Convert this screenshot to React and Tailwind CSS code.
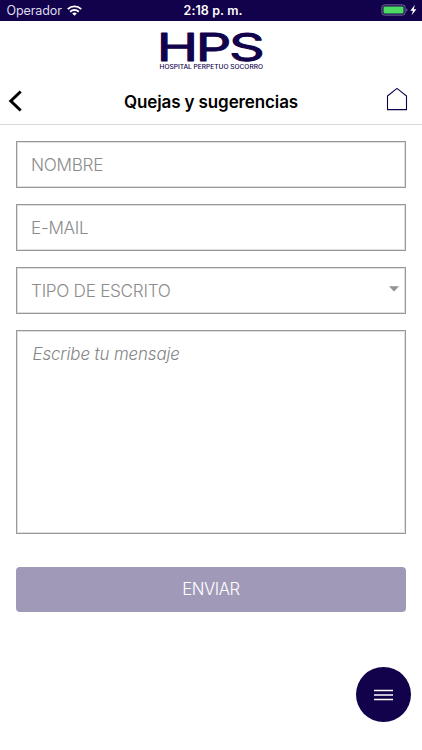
function StatusBar() {
  return (
    <div className="relative flex h-[20.5px] items-center justify-between bg-[#12024b] pl-[6.5px] pr-[4px] text-white">
      <div className="flex items-center gap-[5px]">
        <span className="mt-[2px] text-[12.5px] leading-5 tracking-[-0.1px] text-[#dedbee]">Operador</span>
        <svg width="15" height="11" viewBox="0 0 15 11" fill="none" stroke="#fff" strokeWidth="1.9">
          <path d="M.8 4.1a9.6 9.6 0 0 1 13.4 0" />
          <path d="M3.2 6.8a6.2 6.2 0 0 1 8.6 0" />
          <path d="M7.5 10.8 5.2 8.6a3.3 3.3 0 0 1 4.6 0z" fill="#fff" stroke="none" />
        </svg>
      </div>
      <span className="absolute left-[183.5px] top-[1px] text-[12.5px] font-semibold leading-5 tracking-[0.1px]">2:18 p. m.</span>
      <svg width="37" height="12" viewBox="0 0 37 12">
        <rect x=".9" y=".9" width="23.2" height="10.2" rx="2.6" fill="none" stroke="#77709a" />
        <rect x="2.5" y="2.4" width="20" height="7.2" rx="1" fill="#4cd964" />
        <path d="M25.4 4.2c1.4.6 1.4 3 0 3.6z" fill="#77709a" />
        <path d="m33.9.8-4.6 6h2.6l-1.3 4.4 4.8-6h-2.7z" fill="#fff" />
      </svg>
    </div>
  );
}

function Header() {
  return (
    <header className="flex h-[104.5px] flex-col items-center border-b border-[#dadada]">
      <svg className="mt-[9.5px] h-[42px] w-[110px] shrink-0 overflow-visible" viewBox="156 30 110 42" fill="#12024b" fontFamily="Inter, sans-serif">
        <text x="156.7" y="60.8" fontSize="38.6" fontWeight="400" stroke="#12024b" strokeWidth="1" strokeLinejoin="round" letterSpacing="-1.6" textLength="105.6" lengthAdjust="spacingAndGlyphs">HPS</text>
        <text x="159.5" y="68.8" fontSize="5.8" fontWeight="500" textLength="103.5" lengthAdjust="spacingAndGlyphs">HOSPITAL PERPETUO SOCORRO</text>
      </svg>
      <div className="flex w-full items-center justify-between pl-[8px] pr-[14px] pt-[12px]">
        <svg className="mt-[4px]" width="15" height="24" viewBox="0 0 15 24" fill="none" stroke="#000" strokeWidth="3">
          <path d="M12.7 2.5 2.8 12l9.9 9.5" />
        </svg>
        <h1 className="mt-[6px] pl-[13px] text-[17px] font-semibold leading-6 tracking-[-0.12px] text-black">Quejas y sugerencias</h1>
        <svg width="22" height="24" viewBox="0 0 22 24" fill="none" stroke="#12024b" strokeWidth="1.1">
          <path d="M1.5 9 11 1.4 20.5 9v13.6h-19z" />
        </svg>
      </div>
    </header>
  );
}

function Field({ label, select }) {
  return (
    <div className="flex h-[47px] items-center justify-between border border-[#999] pl-[14px] pr-[6px] text-[17.2px] text-[#8c8c8c] shadow-[inset_0_0_0_1px_#dedede]">
      <span className="mt-[2px] font-light tracking-[-0.3px]">{label}</span>
      {select && (
        <svg className="-mt-[3px]" width="10" height="6" viewBox="0 0 10 6" fill="#929292">
          <path d="M0 .3h10L5 5.6z" />
        </svg>
      )}
    </div>
  );
}

export default function App() {
  return (
    <div className="relative h-[750px] w-[422px] overflow-hidden bg-white font-['Inter',sans-serif]">
      <StatusBar />
      <Header />
      <main className="px-4 pt-[15.5px]">
        <div className="flex flex-col gap-[16.2px]">
          <Field label="NOMBRE" />
          <Field label="E-MAIL" />
          <Field label="TIPO DE ESCRITO" select />
          <div className="h-[204px] border border-[#999] px-[15.5px] pt-[11px] text-[16.9px] font-light italic leading-6 tracking-[-0.12px] text-[#858585] shadow-[inset_0_0_0_1px_#dedede]">
            Escribe tu mensaje
          </div>
        </div>
        <button className="mt-[32.8px] flex h-[45.2px] w-full items-center justify-center rounded-[4px] bg-[#a09ab8] pt-px text-[16.7px] font-light tracking-[-0.4px] text-white">
          ENVIAR
        </button>
      </main>
      <button className="absolute left-[355.5px] top-[667px] flex size-[55px] flex-col items-center justify-center rounded-full bg-[#12024b]">
        <svg width="19" height="12" viewBox="0 0 19 12" stroke="#fff" strokeWidth="1.5">
          <path d="M0 1.5h19M0 6h19M0 10.5h19" />
        </svg>
      </button>
    </div>
  );
}
